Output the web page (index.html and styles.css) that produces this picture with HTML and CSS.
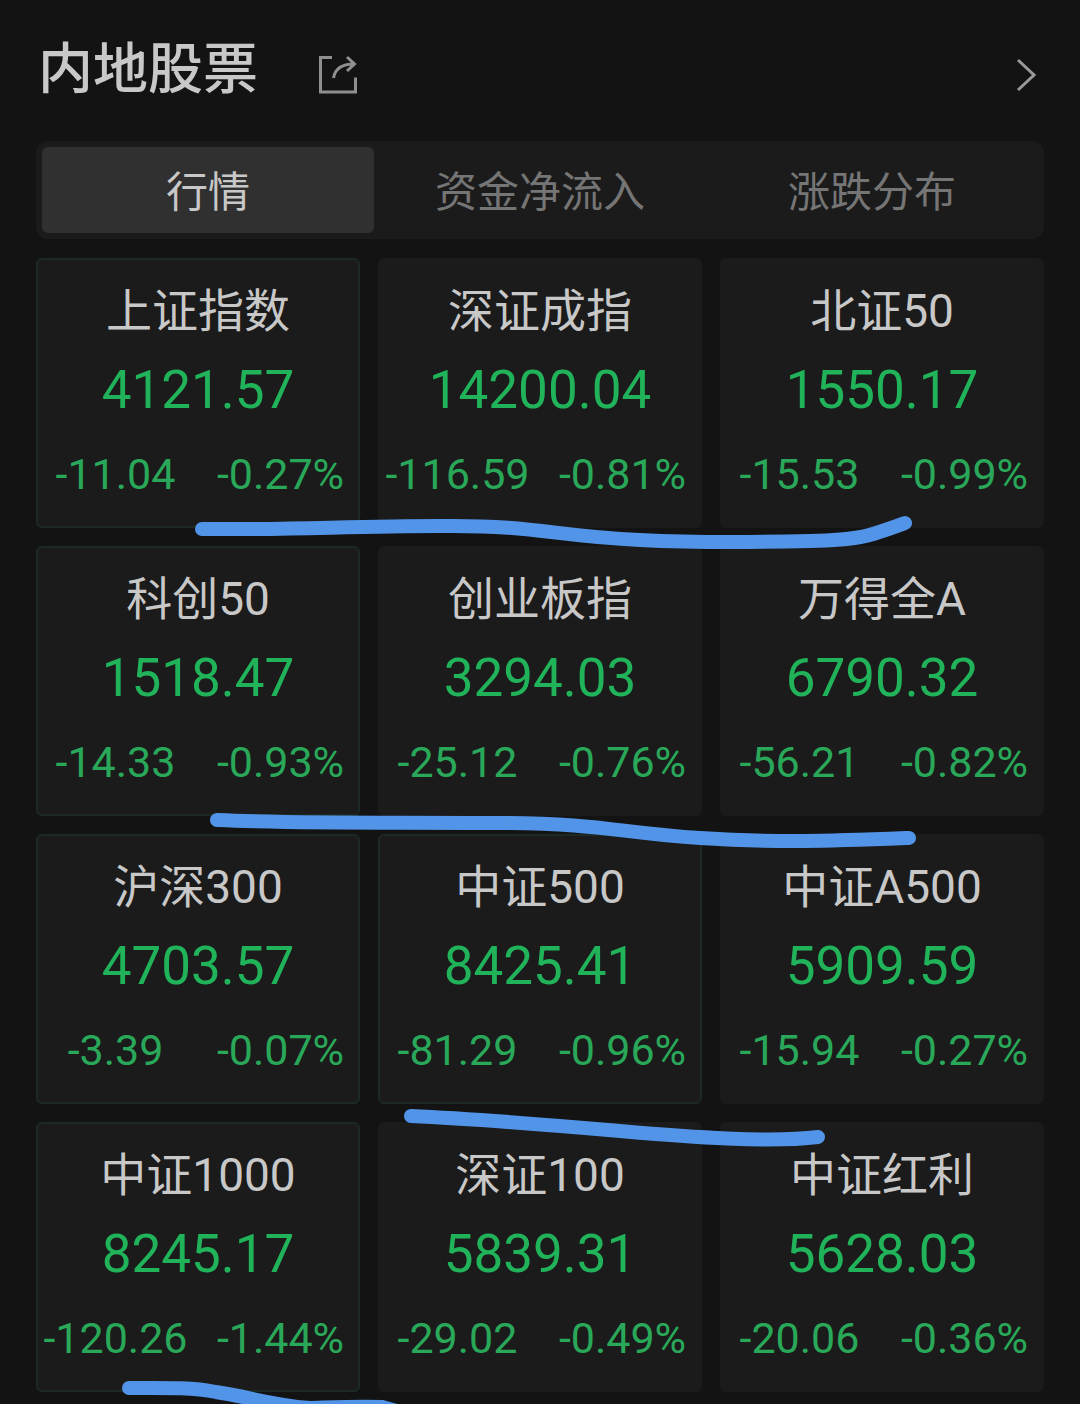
FILE: index.html
```html
<!DOCTYPE html>
<html lang="zh-CN">
<head>
    <meta charset="UTF-8">
    <title>内地股票</title>
    <meta name="viewport" content="width=device-width, initial-scale=1.0">
    <link rel="stylesheet" href="styles.css">
</head>
<body>
    <div class="page">
        <header class="header">
            <h1 class="title">内地股票</h1>
            <button class="icon-btn" type="button" aria-label="分享">
                <svg width="40" height="40" viewBox="0 0 40 40" fill="none" stroke="#8f8f8f" stroke-width="3">
                    <path d="M14 2.5H2.5V37H37.5V22.5"/>
                    <path d="M15.5 23C17 14 23 9 36 9M29 2L36.5 9L29 16"/>
                </svg>
            </button>
            <a class="more" href="#" aria-label="更多">
                <svg width="22" height="34" viewBox="0 0 22 34" fill="none" stroke="#9a9a9a" stroke-width="3">
                    <path d="M2 2L18 17L2 32"/>
                </svg>
            </a>
        </header>

        <nav class="tabs">
            <button class="tab active" type="button">行情</button>
            <button class="tab" type="button">资金净流入</button>
            <button class="tab" type="button">涨跌分布</button>
        </nav>

        <main class="grid">
            <section class="card outlined">
                <h2 class="name">上证指数</h2>
                <p class="price">4121.57</p>
                <p class="change"><span>-11.04</span><span>-0.27%</span></p>
            </section>
            <section class="card">
                <h2 class="name">深证成指</h2>
                <p class="price">14200.04</p>
                <p class="change"><span>-116.59</span><span>-0.81%</span></p>
            </section>
            <section class="card">
                <h2 class="name">北证50</h2>
                <p class="price">1550.17</p>
                <p class="change"><span>-15.53</span><span>-0.99%</span></p>
            </section>

            <section class="card outlined">
                <h2 class="name">科创50</h2>
                <p class="price">1518.47</p>
                <p class="change"><span>-14.33</span><span>-0.93%</span></p>
            </section>
            <section class="card">
                <h2 class="name">创业板指</h2>
                <p class="price">3294.03</p>
                <p class="change"><span>-25.12</span><span>-0.76%</span></p>
            </section>
            <section class="card">
                <h2 class="name">万得全A</h2>
                <p class="price">6790.32</p>
                <p class="change"><span>-56.21</span><span>-0.82%</span></p>
            </section>

            <section class="card outlined">
                <h2 class="name">沪深300</h2>
                <p class="price">4703.57</p>
                <p class="change"><span>-3.39</span><span>-0.07%</span></p>
            </section>
            <section class="card outlined">
                <h2 class="name">中证500</h2>
                <p class="price">8425.41</p>
                <p class="change"><span>-81.29</span><span>-0.96%</span></p>
            </section>
            <section class="card">
                <h2 class="name">中证A500</h2>
                <p class="price">5909.59</p>
                <p class="change"><span>-15.94</span><span>-0.27%</span></p>
            </section>

            <section class="card outlined">
                <h2 class="name">中证1000</h2>
                <p class="price">8245.17</p>
                <p class="change"><span>-120.26</span><span>-1.44%</span></p>
            </section>
            <section class="card">
                <h2 class="name">深证100</h2>
                <p class="price">5839.31</p>
                <p class="change"><span>-29.02</span><span>-0.49%</span></p>
            </section>
            <section class="card">
                <h2 class="name">中证红利</h2>
                <p class="price">5628.03</p>
                <p class="change"><span>-20.06</span><span>-0.36%</span></p>
            </section>
        </main>

        <!-- hand-drawn marker strokes over the cards -->
        <svg class="marks" viewBox="0 0 1080 1404" aria-hidden="true">
            <path d="M202 529C290 530 350 526 440 526C540 525 550 536 640 540C700 543 770 542 810 541C860 540 870 536 905 523"/>
            <path d="M217 820C310 824 400 822 500 823C600 823 620 833 700 838C780 843 830 841 909 838"/>
            <path d="M411 1116C480 1119 550 1125 620 1131C690 1137 770 1143 818 1137"/>
            <path d="M129 1388C160 1388 190 1387 216 1392C250 1397 270 1405 310 1408C340 1407 360 1406 382 1407L400 1412"/>
        </svg>
    </div>
</body>
</html>
```

FILE: styles.css
```css
* {
    box-sizing: border-box;
}
body {
    margin: 0;
    background: #131313;
    color: #c8c8c8;
    font-family: Roboto, "Noto Sans CJK SC", sans-serif;
}
.page {
    position: relative;
    padding: 0 36px 12px;
    overflow: hidden;
}
.header {
    display: flex;
    align-items: center;
    height: 141px;
    padding: 8px 6px 0 2px;
}
.title {
    margin: 0 60px 12px 0;
    font-size: 55px;
    font-weight: 500;
    line-height: 80px;
}
.icon-btn {
    padding: 0;
    border: 0;
    background: none;
    cursor: pointer;
}
.icon-btn svg,
.more svg {
    display: block;
}
.more {
    margin-left: auto;
}
.tabs {
    display: grid;
    grid-template-columns: repeat(3, 1fr);
    padding: 6px;
    margin-bottom: 19px;
    background: #1b1b1b;
    border-radius: 12px;
}
.tab {
    height: 86px;
    padding: 0 0 4px;
    border: 0;
    border-radius: 6px;
    background: none;
    color: #757575;
    font-family: inherit;
    font-size: 42px;
    cursor: pointer;
}
.tab.active {
    background: #303030;
    color: #c8c8c8;
}
.grid {
    display: grid;
    grid-template-columns: repeat(3, 1fr);
    gap: 18px;
}
.card {
    padding: 16px 0 12px;
    border: 2px solid transparent;
    border-radius: 6px;
    background: #1b1b1b;
    text-align: center;
}
.card.outlined {
    border-color: #1c2a22;
}
.name {
    margin: 0;
    font-size: 46px;
    font-weight: 400;
    line-height: 70px;
}
.price {
    margin: 0;
    color: #21b35a;
    font-size: 53px;
    line-height: 88px;
}
.change {
    display: grid;
    grid-template-columns: 1fr 1fr;
    gap: 10px;
    margin: 0;
    color: #2aa85a;
    font-size: 43px;
    line-height: 80px;
}
.marks {
    position: absolute;
    top: 0;
    left: 0;
    width: 100%;
    fill: none;
    stroke: #5294e8;
    stroke-width: 14;
    stroke-linecap: round;
    pointer-events: none;
}
```
